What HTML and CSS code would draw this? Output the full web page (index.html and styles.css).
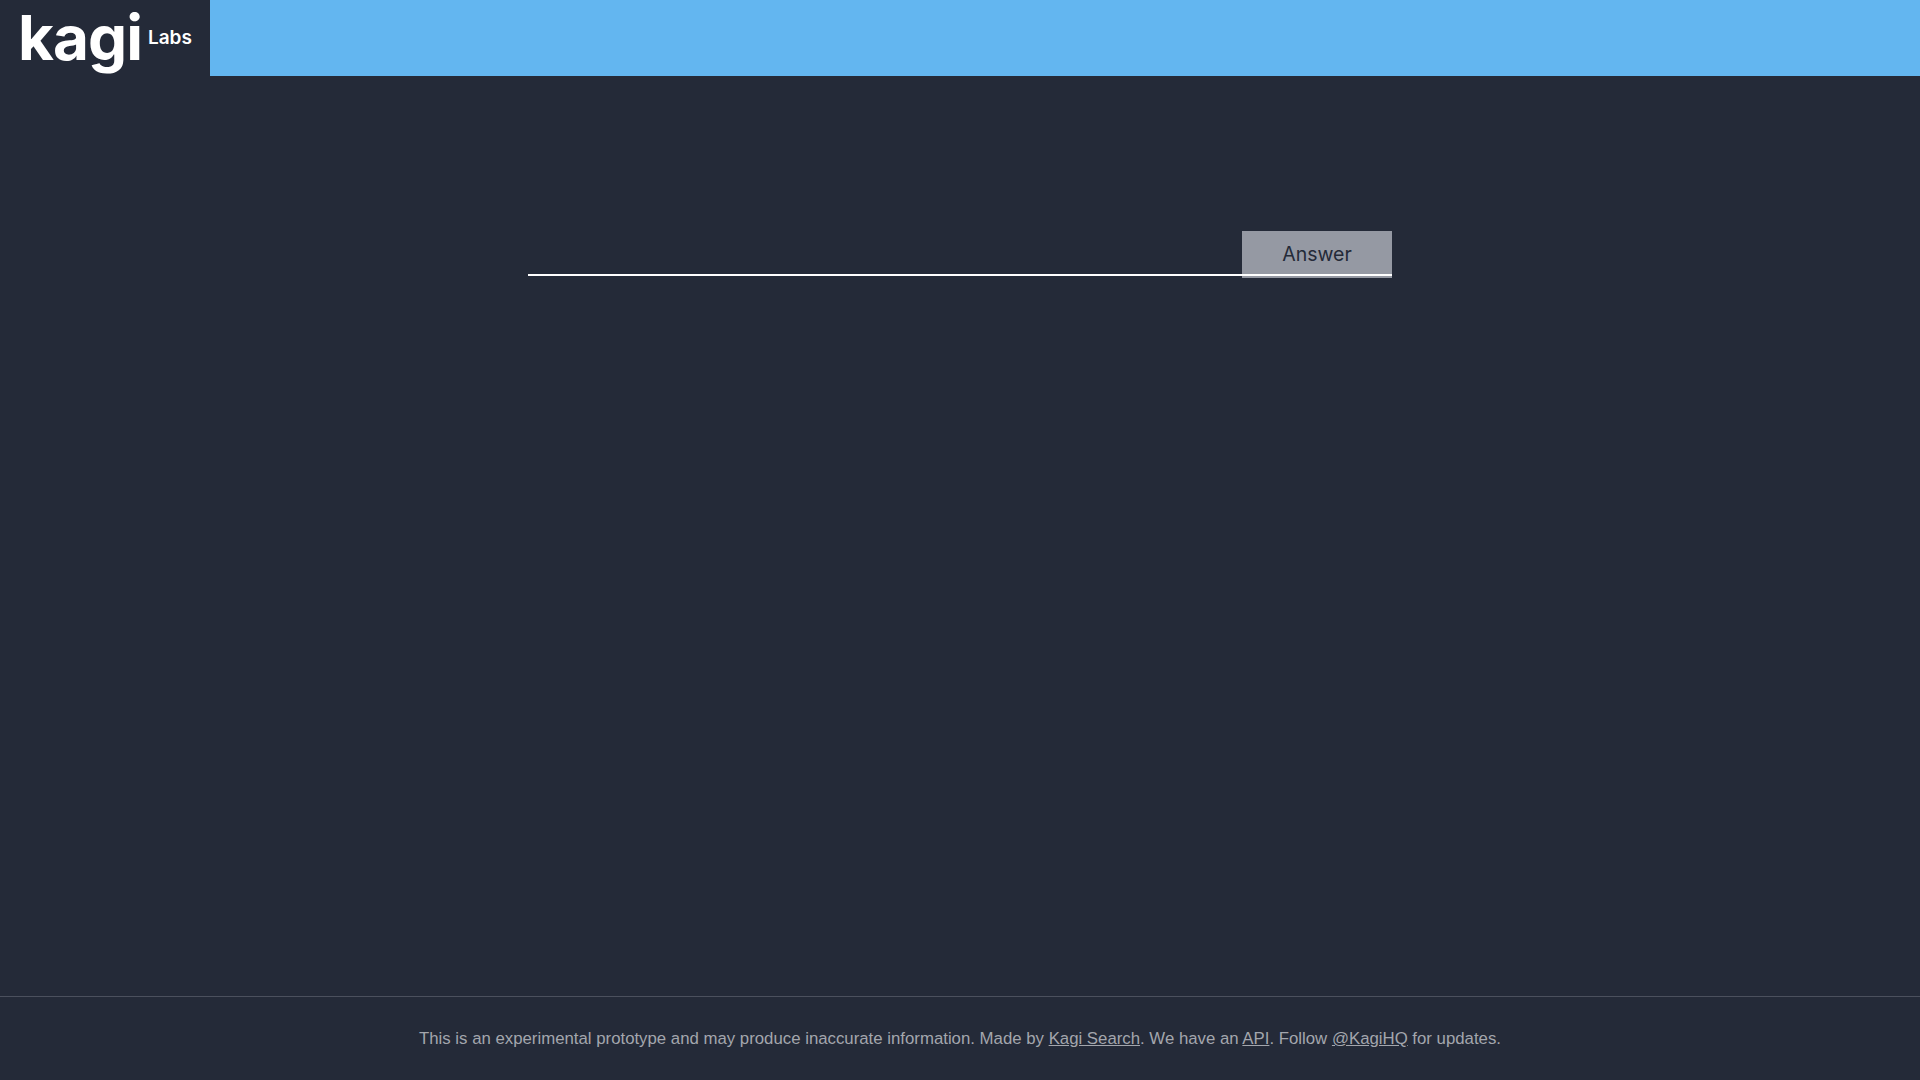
FILE: index.html
```html
<!DOCTYPE html>
<html lang="en">
<head>
    <meta charset="UTF-8">
    <meta name="viewport" content="width=device-width, initial-scale=1.0">
    <title>Kagi Labs</title>
    <link rel="stylesheet" href="styles.css">
</head>
<body>
    <header class="top-bar">
        <a class="brand" href="#">
            <span class="brand-name">kagi</span>
            <span class="brand-labs">Labs</span>
        </a>
        <div class="top-strip"></div>
    </header>

    <main class="content">
        <form class="ask-form">
            <input class="ask-input" type="text" aria-label="Question">
            <button class="ask-button" type="button">Answer</button>
        </form>
    </main>

    <footer class="site-footer">
        This is an experimental prototype and may produce inaccurate information. Made by <a href="#">Kagi Search</a>. We have an <a href="#">API</a>. Follow <a href="#">@KagiHQ</a> for updates.
    </footer>
</body>
</html>
```

FILE: styles.css
```css
body {
    display: flex;
    flex-direction: column;
    height: 100vh;
    margin: 0;
    overflow: hidden;
    background-color: #242a38;
    font-family: "Liberation Sans", Arial, sans-serif;
}

.top-bar {
    display: flex;
    height: 76px;
    flex: none;
}
.brand {
    display: flex;
    align-items: flex-start;
    box-sizing: border-box;
    width: 210px;
    padding: 0 0 0 18px;
    color: white;
    text-decoration: none;
    font-family: Inter, sans-serif;
}
.brand-name {
    font-size: 62px;
    font-weight: 700;
    line-height: 76px;
    letter-spacing: -1px;
}
.brand-labs {
    margin: 27px 0 0 6px;
    font-size: 19px;
    font-weight: 600;
    line-height: 22px;
}
.top-strip {
    flex: 1;
    background-color: #63b6f0;
}

.content {
    flex: 1;
    padding-top: 155px;
}
.ask-form {
    display: flex;
    align-items: flex-start;
    width: 864px;
    margin: 0 auto;
}
.ask-input {
    flex: 1;
    box-sizing: border-box;
    height: 45px;
    padding: 0 8px;
    border: 0;
    border-bottom: 2px solid white;
    background: transparent;
    color: white;
    font-size: 18px;
    outline: none;
}
.ask-button {
    position: relative;
    width: 150px;
    height: 47px;
    padding: 0 0 2px;
    border: 0;
    background-color: #9599a3;
    color: #242a38;
    font-family: Inter, sans-serif;
    font-size: 19.5px;
}
/* 入力欄の下線がボタンの上まで続く */
.ask-button::after {
    content: "";
    position: absolute;
    left: 0;
    right: 0;
    bottom: 2px;
    height: 2px;
    background-color: white;
}

.site-footer {
    flex: none;
    box-sizing: border-box;
    height: 84px;
    border-top: 1px solid #4b505d;
    color: #a3a6ad;
    font-size: 16.8px;
    line-height: 83px;
    text-align: center;
}
.site-footer a {
    color: inherit;
}
```
